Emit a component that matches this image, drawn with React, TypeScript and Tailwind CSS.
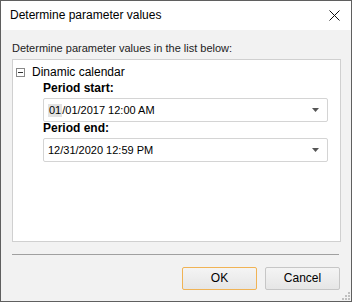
import React from 'react';

const ComboBox = ({ value, highlight }: { value: string; highlight?: string }) => (
  <div className="flex items-center justify-between h-[24px] w-[285px] border border-[#d4d4d4] rounded-[2px] bg-white pl-[4px] pr-[8px]">
    <span className="flex items-center">
      {highlight && <span className="bg-[#e3e3e3] px-px">{highlight}</span>}
      <span>{value}</span>
    </span>
    <svg width="7" height="4" viewBox="0 0 7 4">
      <path d="M0 0 H7 L3.5 4 Z" fill="#555" />
    </svg>
  </div>
);

const App = () => {
  return (
    <div className="w-[352px] h-[302px] border border-[#5f5f5f] bg-[#f2f2f2] flex flex-col text-black font-['Liberation_Sans',sans-serif] text-[11px] leading-[13px]">
      {/* Title bar */}
      <div className="h-[29px] bg-white flex items-center justify-between pl-[9px] pr-[11px]">
        <span className="text-[12px]">Determine parameter values</span>
        <svg width="11" height="11" viewBox="0 0 11 11">
          <path d="M0.5 0.5 L10.5 10.5 M10.5 0.5 L0.5 10.5" stroke="#111" strokeWidth="1" />
        </svg>
      </div>

      {/* Body */}
      <div className="flex-1 flex flex-col pl-[11px] pr-[10px] pt-[12px] relative">
        <span className="text-[#222]">Determine parameter values in the list below:</span>

        <div className="mt-[4px] h-[183px] bg-white border border-[#d0d0d0] pl-[3px] pt-[5px]">
          <div className="flex items-center gap-[7px] text-[12px] leading-[14px]">
            <svg width="9" height="9" viewBox="0 0 9 9">
              <rect x="0.5" y="0.5" width="8" height="8" fill="white" stroke="#888" />
              <path d="M2 4.5 H7" stroke="#333" />
            </svg>
            <span>Dinamic calendar</span>
          </div>

          <div className="pl-[27px] flex flex-col">
            <span className="font-bold text-[12px] mt-[3px]">Period start:</span>
            <div className="mt-[3px]">
              <ComboBox highlight="01" value="/01/2017 12:00 AM" />
            </div>
            <span className="font-bold text-[12px] mt-0">Period end:</span>
            <div className="mt-[3px]">
              <ComboBox value="12/31/2020 12:59 PM" />
            </div>
          </div>
        </div>

        <div className="mt-[12px] mr-[2px] h-px bg-[#a0a0a0]" />

        <div className="mt-[12px] flex justify-end gap-[8px] pr-px">
          <button className="w-[75px] h-[23px] rounded-[2px] border border-[#f0b355] bg-gradient-to-b from-[#f4f4f4] to-[#e6e6e6] text-[12px]">
            OK
          </button>
          <button className="w-[75px] h-[23px] rounded-[2px] border border-[#c6c6c6] bg-gradient-to-b from-[#f4f4f4] to-[#e6e6e6] text-[12px]">
            Cancel
          </button>
        </div>

        {/* Resize grip */}
        <svg className="absolute right-[1px] bottom-[1px]" width="8" height="8" viewBox="0 0 8 8">
          <rect x="6" y="0" width="2" height="2" fill="#c0c0c0" />
          <rect x="3" y="3" width="2" height="2" fill="#c0c0c0" />
          <rect x="6" y="3" width="2" height="2" fill="#c0c0c0" />
          <rect x="0" y="6" width="2" height="2" fill="#c0c0c0" />
          <rect x="3" y="6" width="2" height="2" fill="#c0c0c0" />
          <rect x="6" y="6" width="2" height="2" fill="#c0c0c0" />
        </svg>
      </div>
    </div>
  );
};

export default App;
